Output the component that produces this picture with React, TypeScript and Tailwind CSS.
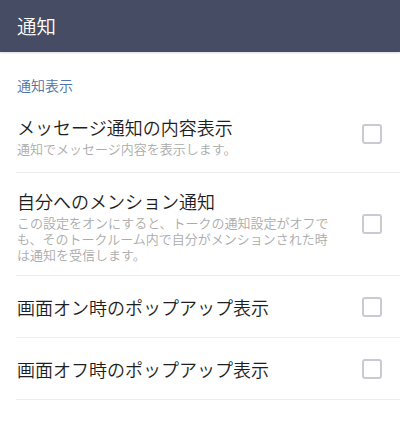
import React from 'react';

type Item = { title: string; desc?: string; pad: string };

const ITEMS: Item[] = [
  { title: 'メッセージ通知の内容表示', desc: '通知でメッセージ内容を表示します。', pad: 'pt-[19px] pb-[15px]' },
  {
    title: '自分へのメンション通知',
    desc: 'この設定をオンにすると、トークの通知設定がオフでも、そのトークルーム内で自分がメンションされた時は通知を受信します。',
    pad: 'pt-[16px] pb-[12px]',
  },
  { title: '画面オン時のポップアップ表示', pad: 'pt-[19px] pb-[18px]' },
  { title: '画面オフ時のポップアップ表示', pad: 'pt-[19px] pb-[18px]' },
];

const Checkbox = () => (
  <div className="w-[20px] h-[20px] shrink-0 rounded-[3px] border-2 border-[#c9cad3] bg-white" />
);

const SettingRow = ({ item }: { item: Item }) => (
  <div className="ml-[16px] flex items-center border-b border-[#ededed] pr-[18px]">
    <div className={`flex-1 pl-[1px] ${item.pad}`}>
      <div className="text-[18px] leading-[24px] font-[350] text-[#1e1e1e]">{item.title}</div>
      {item.desc && (
        <div className="mt-[2px] w-[322px] text-[13px] leading-[16px] font-[350] text-[#ababab]">{item.desc}</div>
      )}
    </div>
    <Checkbox />
  </div>
);

export default function App() {
  return (
    <div
      className="w-[400px] h-[423px] bg-white overflow-hidden"
      style={{ fontFamily: '"Noto Sans CJK JP", "Noto Sans", sans-serif' }}
    >
      <div className="h-[52px] bg-[#454c63] flex items-center px-[17px] shadow-[0_1px_2px_rgba(0,0,0,0.15)]">
        <span className="text-[19.5px] font-[350] text-white">通知</span>
      </div>
      <div className="pl-[17px] pt-[24px] pb-[2px] text-[14px] leading-[18px] font-[350] text-[#4f74a8]">通知表示</div>
      {ITEMS.map((item, i) => (
        <SettingRow key={i} item={item} />
      ))}
    </div>
  );
}
